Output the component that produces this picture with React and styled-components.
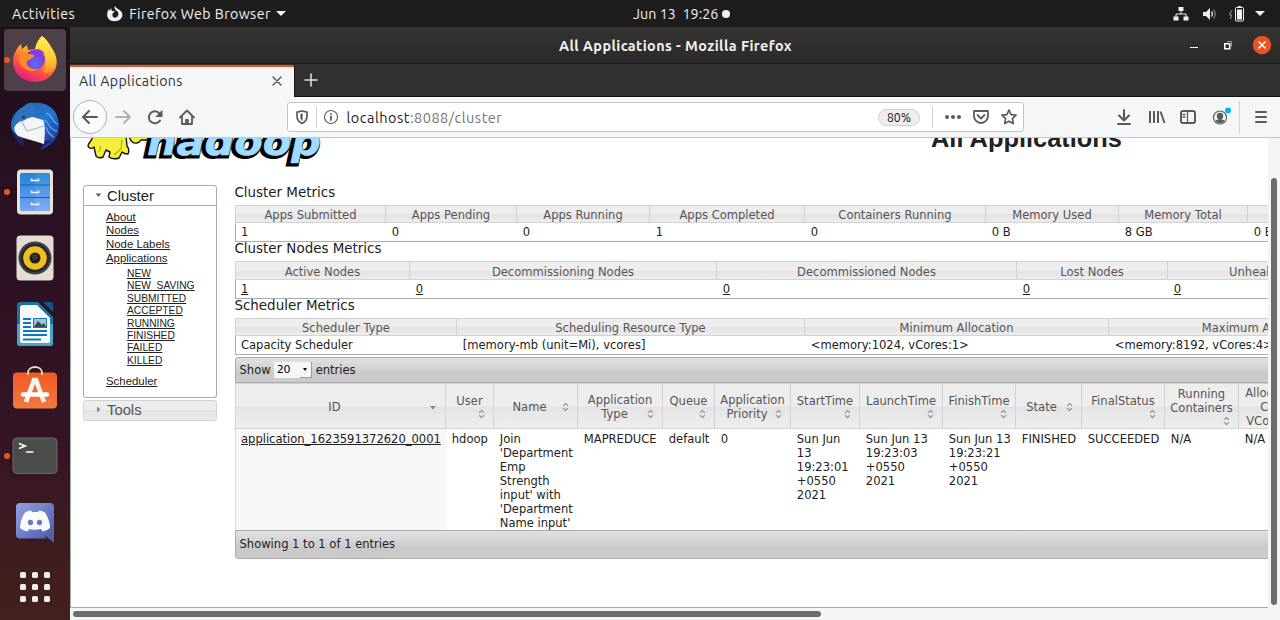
import React from "react";
import styled, { createGlobalStyle, css } from "styled-components";

const Global = createGlobalStyle`
  * { box-sizing: border-box; }
  body { margin: 0; overflow: hidden; background: #fff; }
  svg { display: block; flex: none; }
`;

const ui = css`font-family: Ubuntu, "Noto Sans", "Open Sans", sans-serif;`;
const arial = css`font-family: "Liberation Sans", Arial, sans-serif;`;
const verdana = css`font-family: "DejaVu Sans", Verdana, sans-serif;`;

const Desktop = styled.div`
  width: 1280px; height: 620px; overflow: hidden;
  display: flex; flex-direction: column;
`;
const TopBar = styled.header`
  ${ui} height: 27px; flex: none; background: #1d1d1d; color: #f2f2f2;
  display: grid; grid-template-columns: 621px auto 1fr; align-items: center;
  font-size: 14.2px; line-height: 26px; padding: 0 15px 0 12px;
`;
const TopLeft = styled.div`display: flex; align-items: center;`;
const TopRight = styled.div`display: flex; align-items: center; justify-content: flex-end;`;
const Label = styled.span`
  white-space: pre; letter-spacing: ${(p) => p.$ls || 0}px; margin-left: ${(p) => p.$ml || 0}px;
`;
const Clock = styled.div`display: flex; align-items: center; white-space: pre; gap: 4px; letter-spacing: 0.07px;`;
const ClockDot = styled.i`width: 8px; height: 8px; border-radius: 50%; background: #f2f2f2;`;
const Caret = styled.i`
  border: 5px solid transparent; border-top-color: #f2f2f2; border-bottom: 0;
  margin-left: ${(p) => p.$ml}px;
`;
const SwirlIcon = styled.svg`margin-left: 32px;`;

const Workspace = styled.div`display: flex; flex: 1; min-height: 0;`;
const Dock = styled.nav`
  width: 70px; flex: none; background: linear-gradient(#1f0f1b, #2c1122 40%, #351525 70%, #43211d);
`;
const DockItem = styled.div`
  position: relative; height: 66px; display: flex; align-items: center; justify-content: center;
  ${(p) => p.$running && css`
    &::after { content: ""; position: absolute; left: 4px; top: 30px; width: 6px; height: 6px; border-radius: 50%; background: #e95420; }
  `}
`;
const DockTile = styled.div`
  width: 62px; height: 62px; border-radius: 4px; display: flex; align-items: center; justify-content: center;
  background: ${(p) => (p.$active ? "#4d4048" : "transparent")};
  padding-bottom: ${(p) => (p.$lift > 0 ? p.$lift * 2 : 0)}px;
  padding-top: ${(p) => (p.$lift < 0 ? p.$lift * -2 : 0)}px;
`;

const Window = styled.div`flex: 1; min-width: 0; display: flex; flex-direction: column; background: #f5f6f8;`;
const TitleBar = styled.div`
  ${ui} height: 37px; flex: none; display: grid; grid-template-columns: 1fr auto 1fr; align-items: center;
  background: linear-gradient(#353330, #2b2a2a); border-bottom: 1px solid #1c1c1c; color: #f2f2f2;
  font-weight: 700; font-size: 14.4px;
`;
const TitleText = styled.span`grid-column: 2; letter-spacing: 0.42px; white-space: pre; padding: 2px 0 0 1px;`;
const WindowButtons = styled.div`display: flex; justify-content: flex-end; align-items: center; padding-right: 8px;`;
const TabStrip = styled.div`height: 33px; flex: none; display: flex; background: #323031; border-bottom: 1px solid #111;`;
const Tab = styled.div`
  ${ui} width: 224px; height: 33px; background: #f5f6f8; border-top: 2px solid #e95420; margin-top: 1px;
  display: flex; align-items: center; justify-content: space-between; padding: 0 12px 3px 9px;
  font-size: 14.2px; color: #2e3436;
`;
const NewTab = styled.div`width: 33px; display: flex; align-items: center; justify-content: center; border-left: 1px solid #161616;`;
const Toolbar = styled.div`
  height: 41px; flex: none; background: #f5f6f8; border-bottom: 1px solid #c3c5c8;
  display: flex; align-items: center; padding: 0 13px 0 3px;
`;
const BackButton = styled.div`
  width: 34px; height: 34px; border-radius: 50%; border: 1px solid #b1b1b3; background: #fbfbfc;
  display: flex; align-items: center; justify-content: center;
`;
const NavIcons = styled.div`display: flex; align-items: center; width: 180px; padding-left: 8px; gap: 16px;`;
const UrlBar = styled.div`
  width: 737px; height: 30px; border: 1px solid #c2c4c8; border-radius: 3px; background: #fff;
  display: flex; align-items: center; padding: 0 6px 0 6px;
`;
const Divider = styled.i`width: 1px; height: ${(p) => p.$h || 22}px; background: #cfd1d5; margin: ${(p) => p.$m};`;
const Url = styled.span`
  ${ui} font-size: 14.5px; color: #222; margin-left: 7.5px; flex: 1; white-space: pre; letter-spacing: 0.5px;
  span { color: #737578; }
`;
const Zoom = styled.span`
  ${ui} width: 42px; height: 17px; border: 1px solid #d0d0d2; border-radius: 9px; background: #eeeeef;
  font-size: 12.2px; line-height: 15px; text-align: center; color: #111;
`;
const UrlActions = styled.div`display: flex; align-items: center; gap: 12px;`;
const ToolbarRight = styled.div`display: flex; align-items: center; justify-content: flex-end; flex: 1; height: 100%;`;

const Viewport = styled.div`flex: 1; min-height: 0; display: grid; grid-template: 470px 12px / 1198px 12px;`;
const Page = styled.main`
  background: #fff; border-left: 1px solid #a9a9ab; border-bottom: 1px solid #a9a9ab; overflow: hidden; color: #222;
`;
const VTrack = styled.div`background: #f3f4f6; padding: 40px 3px 0; i { display: block; width: 6px; height: 427px; border-radius: 3px; background: #6c6c6c; }`;
const HTrack = styled.div`background: #f4f5f6; padding: 3px 3px 0; grid-column: 1 / 3; i { display: block; width: 748px; height: 6px; border-radius: 3px; background: #6c6c6c; }`;

const Hero = styled.div`height: 47px; overflow: hidden; display: flex; padding-left: 12px;`;
const HeroTitle = styled.h1`
  ${arial} margin: -16px 0 0 603px; font-size: 25.4px; line-height: 32px; font-weight: 700; white-space: nowrap;
`;
const Columns = styled.div`display: flex; align-items: flex-start; padding-left: 12px;`;
const Side = styled.aside`${arial} width: 134px; flex: none; margin-right: 18px;`;
const SideHead = styled.div`
  height: 21px; border: 1px solid ${(p) => (p.$open ? "#aaa" : "#d3d3d3")};
  border-radius: ${(p) => (p.$open ? "3px 3px 0 0" : "3px")};
  background: ${(p) => (p.$open ? "#fff" : "linear-gradient(#ededed 50%, #e3e3e3 50%, #ececec)")};
  color: ${(p) => (p.$open ? "#212121" : "#555")};
  font-size: 14.8px; line-height: 20px; display: flex; align-items: center; padding: 0 0 ${(p) => (p.$open ? 0 : 2)}px 11px; gap: 5px;
`;
const SideBody = styled.div`
  height: 192px; border: 1px solid #aaa; border-top: 0; border-radius: 0 0 3px 3px; margin-bottom: 2px; padding: 4.6px 0 0 22px;
`;
const SideLink = styled.a`
  display: block; width: max-content; text-decoration: underline; color: #222; white-space: pre;
  font-size: ${(p) => (p.$sub ? 10.25 : 11.4)}px; line-height: ${(p) => (p.$sub ? 12.4 : 13.7)}px;
  margin-left: ${(p) => (p.$sub ? 21 : 0)}px; margin-top: ${(p) => p.$mt || 0}px;
`;
const Main = styled.section`${verdana} width: 1380px; flex: none; font-size: 11.54px;`;
const MetricTitle = styled.h2`
  margin: 0 0 0 -0.6px; font-weight: 400; font-size: 13.45px; height: ${(p) => p.$h}px; line-height: ${(p) => p.$lh}px; white-space: pre;
`;
const Row = styled.div`
  display: grid; grid-template-columns: ${(p) => p.$cols}; height: ${(p) => p.$h}px;
`;
const Head = styled.div`
  border: 1px solid #d3d3d3; border-left-width: ${(p) => (p.$first ? 1 : 0)}px;
  background: linear-gradient(#ededed 50%, #e4e4e4 52%, #ececec); color: #555;
  display: flex; align-items: center; justify-content: center; padding-top: 2px; white-space: pre; overflow: hidden;
`;
const Value = styled.div`
  padding: 0 0 0 ${(p) => (p.$first ? 5 : 5.8)}px; line-height: 18px; white-space: pre;
  border-bottom: 1px solid #aaa; border-left: ${(p) => (p.$first ? "1px solid #aaa" : 0)};
`;
const GridBar = styled.div`
  height: ${(p) => (p.$foot ? 29 : 26)}px; border: 1px solid #aaa; background: linear-gradient(#e2e2e2, #c9c9c9 65%, #cccccc);
  border-radius: ${(p) => (p.$foot ? "0 0 3px 3px" : "3px 3px 0 0")}; margin-top: ${(p) => (p.$foot ? 0 : 4)}px;
  display: flex; align-items: center; padding: 0 0 1px 3.5px; white-space: pre;
`;
const Select = styled.span`
  display: flex; align-items: center; justify-content: space-between; width: 38px; height: 16px; margin: 0 4px 0 3px;
  background: #f5f6f8; padding-left: 3px; color: #000; font-size: 11px;
  i { width: 12px; height: 16px; border: solid #999; border-width: 0 1px 1px 0; display: flex; align-items: center; justify-content: center; }
  i::after { content: ""; border: 2.5px solid transparent; border-top: 3px solid #000; border-bottom: 0; }
`;
const SortHead = styled.div`
  position: relative; border: 1px solid #d3d3d3; border-left-width: ${(p) => (p.$first ? 1 : 0)}px;
  background: linear-gradient(#ededed 50%, #e3e3e3 52%, #efefef); color: #555; text-align: center;
  display: flex; align-items: center; justify-content: center; line-height: 14px; white-space: pre;
  padding: ${(p) => p.$pad || "0"};
`;
const SortMark = styled.span`position: absolute; right: 8px; top: ${(p) => p.$top}px;`;
const Cell = styled.div`
  padding: 3px 0 0 ${(p) => (p.$first ? 5 : 5.8)}px; line-height: 14px; white-space: pre;
  border-left: ${(p) => (p.$first ? "1px solid #ddd" : 0)}; background: ${(p) => (p.$first ? "#f7f7f7" : "transparent")};
  a { text-decoration: underline; }
`;

const dark = "#5a5b5d";

const FirefoxIcon = () => (
  <svg width="46" height="48" viewBox="0 0 46 48">
    <defs>
      <linearGradient id="fx" x1="0.75" y1="0.05" x2="0.3" y2="1"><stop offset="0" stopColor="#fff44f" /><stop offset=".35" stopColor="#ffb22e" /><stop offset=".65" stopColor="#ff5a36" /><stop offset="1" stopColor="#e31587" /></linearGradient>
      <radialGradient id="fp" cx=".5" cy=".7" r=".7"><stop offset="0" stopColor="#5d6cf0" /><stop offset="1" stopColor="#8b30d0" /></radialGradient>
      <linearGradient id="fy" x1="0.6" y1="0" x2="0.6" y2="1"><stop offset="0" stopColor="#fff050" /><stop offset=".6" stopColor="#ffcb35" /><stop offset="1" stopColor="#ff8f2c" /></linearGradient>
    </defs>
    <path d="M30 0 C36 5 38 9 39 11 L41 14 C46 22 46 31 41 37 C36 44 29 46 23 46 C9 46 1 36 1 25 C1 18 5 12 9 8 L10 13 L15 9 L16 14 C18 14 21 13 24 13 L24 10 C25 6 27 3 30 0 Z" fill="url(#fx)" />
    <path d="M30 0 C36 5 38 9 39 11 C46 20 45 30 39 36 C35 38 33 37 31 35 C34 32 36 24 32 17 C29 14 26 14 23 13 C24 7 27 3 30 0 Z" fill="url(#fy)" />
    <circle cx="23" cy="23.500" r="10" fill="url(#fp)" />
    <path d="M24 13 Q30 13 33 18 Q29 16 26 17Z" fill="#9a36d8" />
    <path d="M7 19 C11 16 17 18 22 19 C22 22 18 23 15 25 C13 29 18 34 26 33 C20 38 8 33 7 24 Z" fill="#ff8a26" />
  </svg>
);
const ThunderbirdIcon = () => (
  <svg width="50" height="50" viewBox="0 0 50 50">
    <defs><linearGradient id="tb" x1="0" y1="0" x2=".8" y2="1"><stop offset="0" stopColor="#1b5fb4" /><stop offset=".55" stopColor="#2577cf" /><stop offset="1" stopColor="#26308f" /></linearGradient></defs>
    <path d="M13 6 C17 2 20 1 23 2 C38 0 49 10 49 25 C49 38 40 46 30 49 C33 45 33 44 32 42 L16 38 C7 36 1 32 1 24 C1 16 6 9 13 6 Z" fill="url(#tb)" />
    <path d="M2 30 C5 38 9 43 14 46 L13 38 Z M34 40 L42 39 L30 49 Z" fill="#252463" />
    <path d="M4 25 L14 17 L23 16 L33 19 Q36 24 34 43 L8 35 Q4 31 4 25Z" fill="#f4f4f7" />
    <path d="M10 18 L17 30 L34 25" fill="none" stroke="#b4b8c0" strokeWidth="1.200" />
    <path d="M13 6 C17 2 22 1 22 3 C27 6 27 12 24 14 C21 17 17 17 15 19 L12 20 C7 20 6 24 4 27 C2 17 7 9 13 6 Z" fill="#2b74bd" />
    <circle cx="13.500" cy="16" r="1.600" fill="#0e3764" />
    <path d="M34 19 C40 21 38 29 47 30 M36 12 C43 14 42 22 48 23 M36 26 Q38 33 44 36" fill="none" stroke="#4ba3ec" strokeWidth="1.500" />
  </svg>
);
const FilesIcon = () => (
  <svg width="38" height="46" viewBox="0 0 38 46">
    <defs><linearGradient id="fl" x1="0" y1="0" x2="0" y2="1"><stop offset="0" stopColor="#1f83db" /><stop offset="1" stopColor="#78a4f4" /></linearGradient></defs>
    <rect x="1" y="0.500" width="36" height="45" rx="4" fill="#e8e3da" />
    <rect x="4" y="4" width="30" height="38" rx="1.500" fill="url(#fl)" />
    <path d="M19 4 H34 V42 H19Z" fill="#fff" opacity=".08" />
    <path d="M4 16 H34 M4 28.500 H34" stroke="#17639e" strokeWidth="1.200" />
    <path d="M15.500 9.500 V11.500 H22.500 V9.500 M15.500 21.500 V23.500 H22.500 V21.500 M15.500 33.500 V35.500 H22.500 V33.500" fill="none" stroke="#f1f3f6" strokeWidth="1.600" />
  </svg>
);
const RhythmboxIcon = () => (
  <svg width="38" height="46" viewBox="0 0 38 46">
    <rect x="0.500" y="0.500" width="37" height="45" rx="4" fill="#e3ddd2" />
    <circle cx="19" cy="23" r="16.500" fill="#3d4147" /><circle cx="19" cy="23" r="14.300" fill="#25272c" />
    <circle cx="19" cy="23" r="11.800" fill="#f1bf1d" /><circle cx="19" cy="23" r="5.500" fill="#202125" /><circle cx="19" cy="22" r="3" fill="#37373b" />
  </svg>
);
const WriterIcon = () => (
  <svg width="38" height="46" viewBox="0 0 38 46">
    <path d="M4 1 H22 L37 16 V42 Q37 45 34 45 H4 Q1 45 1 42 V4 Q1 1 4 1Z" fill="#1873a8" />
    <path d="M1 23 H37 V42 Q37 45 34 45 H4 Q1 45 1 42Z" fill="#4aa3cf" />
    <path d="M27 1 H35 Q37 1 37 3 V11 Z" fill="#0d5a87" />
    <path d="M7 4 H21 L34 17 V40 Q34 42 32 42 H7 Q4 42 4 40 V7 Q4 4 7 4Z" fill="#f8f8f8" />
    <path d="M7 18 H15 M7 22 H15 M7 26 H15 M7 30 H31 M7 34 H31 M7 38.500 H25" stroke="#1178b8" strokeWidth="2" />
    <rect x="17.500" y="17.500" width="13" height="9" fill="#8ec9ef" stroke="#1178b8" /><path d="M18 26 L22 20 L26 24 L28 22 L30 26Z" fill="#444" /><circle cx="28.500" cy="19.500" r="1.500" fill="#f5c211" />
  </svg>
);
const SoftwareIcon = () => (
  <svg width="46" height="46" viewBox="0 0 46 46">
    <defs><linearGradient id="sw" x1="0" y1="0" x2="0" y2="1"><stop offset="0" stopColor="#f15a24" /><stop offset="1" stopColor="#f3793f" /></linearGradient></defs>
    <rect x="1" y="8.500" width="44" height="36" rx="4" fill="url(#sw)" />
    <path d="M16 11 V9 C16 1 30 1 30 9 V11" fill="none" stroke="#e9dcae" strokeWidth="1.800" />
    <path d="M14 38 L22 16 H24 L32 38" fill="none" stroke="#f8f3ee" strokeWidth="4.600" /><path d="M11 30.500 H35" stroke="#fff" strokeWidth="4.500" strokeLinecap="round" />
  </svg>
);
const TerminalIcon = () => (
  <svg width="46" height="38" viewBox="0 0 46 38">
    <rect x="1" y="1" width="44" height="35.500" rx="4" fill="#4c4c4c" stroke="#6a6a6a" />
    <path d="M7 6.500 L13 9 L7 11.500" fill="none" stroke="#fff" strokeWidth="1.800" /><path d="M14 15 H21.500" stroke="#fff" strokeWidth="1.500" />
  </svg>
);
const DiscordIcon = () => (
  <svg width="38" height="42" viewBox="0 0 38 42">
    <defs><linearGradient id="dc" x1="0" y1="0" x2="1" y2="1"><stop offset="0" stopColor="#93a3dc" /><stop offset=".6" stopColor="#6276c4" /><stop offset="1" stopColor="#4b5695" /></linearGradient></defs>
    <path d="M4 1 H34 Q38 1 38 5 V41 L29 33.500 L30 36.500 H4 Q0 36.500 0 32.500 V5 Q0 1 4 1Z" fill="url(#dc)" />
    <path d="M9 10.500 Q12 8.500 15 8.500 L16 10 H22 L23 8.500 Q26 8.500 29 10.500 Q34 18 34 26 Q31 29 26.500 29.500 L25 27 Q19 28.500 13 27 L11.500 29.500 Q7 29 4 26 Q4 18 9 10.500Z" fill="#fbfbfd" />
    <ellipse cx="14.500" cy="20.500" rx="2.600" ry="2.800" fill="#6779c4" /><ellipse cx="23.500" cy="20.500" rx="2.600" ry="2.800" fill="#6779c4" />
  </svg>
);
const AppsIcon = () => (
  <svg width="30" height="30" viewBox="0 0 30 30">
    {[0, 12, 24].map((y) => [0, 12, 24].map((x) => <rect key={`${x}-${y}`} x={x} y={y} width="6" height="6" rx="1.500" fill="#f0efed" />))}
  </svg>
);

const dockItems = [
  { Icon: FirefoxIcon, active: true, running: true }, { Icon: ThunderbirdIcon }, { Icon: FilesIcon, running: true },
  { Icon: RhythmboxIcon }, { Icon: WriterIcon }, { Icon: SoftwareIcon, lift: 3 }, { Icon: TerminalIcon, running: true },
  { Icon: DiscordIcon, lift: -1 }, { Icon: AppsIcon, lift: 1 },
];

const Ico = ({ children, w = 16, h = 16, c = dark, sw = 2, ...rest }) => (
  <svg width={w} height={h} viewBox={`0 0 ${w} ${h}`} fill="none" stroke={c} strokeWidth={sw} strokeLinecap="round" strokeLinejoin="round" {...rest}>{children}</svg>
);

const SortIcon = ({ desc }) => (
  <svg width={desc ? 8 : 7} height="10" viewBox="0 0 8 10">
    {desc ? <path d="M1 3 H7 L4 6.500Z" fill="#888" />
      : <path d="M1.200 3.700 L4 1 L6.800 3.700 M1.200 6.300 L4 9 L6.800 6.300" fill="none" stroke="#999" strokeWidth="1.500" />}
  </svg>
);

const HadoopLogo = () => (
  <svg width="245" height="30" viewBox="83 138 245 30">
    <g fill="#f4f03a" stroke="#111" strokeWidth="1.400" strokeLinejoin="round">
      <path d="M93 136 C92 141 88 143 88 146 C89 149 92 149 94 147 L96 156 Q99 159 103 157 L106 150 L110 152 L109 157 Q113 160 119 158 L122 152 Q124 154 128 154 Q130 150 127 146 L126 136Z" />
      <path d="M129 136 Q131 144 137 143 Q140 142 141 140 L147 140 L149 136Z" />
    </g>
    <path d="M99 152 Q101 149 100 146 M114 155 L121 149 L122 140" fill="none" stroke="#b2ac12" strokeWidth="1.200" />
    <g transform="translate(144 155)" fontFamily='"DejaVu Sans", sans-serif' fontWeight="700" fontStyle="italic" fontSize="38">
      <text x="1" y="0.500" textLength="174" lengthAdjust="spacingAndGlyphs" stroke="#000" strokeWidth="5" fill="#000" strokeLinejoin="miter">hadoop</text>
      <text x="3" y="-0.500" textLength="174" lengthAdjust="spacingAndGlyphs" stroke="#9fdcff" strokeWidth="0.600" fill="#9fdcff">hadoop</text>
    </g>
  </svg>
);

const MetricTable = ({ widths, heads, values, link, headH = 18, valueH = 17 }) => {
  const cols = widths.map((w) => `${w}px`).join(" ");
  return (
    <>
      <Row $cols={cols} $h={headH}>{heads.map((h, i) => <Head key={h} $first={i === 0}>{h}</Head>)}</Row>
      <Row $cols={cols} $h={valueH}>{values.map((v, i) => <Value key={i} $first={i === 0}>{link ? <u>{v}</u> : v}</Value>)}</Row>
    </>
  );
};

const appColumns = [
  { w: 211, head: "ID", top: 19, desc: true, pad: "2px 12px 0 0", body: <a>application_1623591372620_0001</a> },
  { w: 48, head: "User", top: 25, pad: "0 0 11px", body: "hdoop" },
  { w: 84, head: "Name", top: 18, pad: "2px 12px 0 0", body: "Join\n'Department\nEmp\nStrength\ninput' with\n'Department\nName input'" },
  { w: 85, head: "Application\nType   ", top: 25, pad: "1px 0 0", body: "MAPREDUCE" },
  { w: 52, head: "Queue", top: 25, pad: "0 0 11px", body: "default" },
  { w: 76, head: "Application\nPriority   ", top: 25, pad: "1px 0 0", body: "0" },
  { w: 69, head: "StartTime", top: 25, pad: "0 0 11px", body: "Sun Jun\n13\n19:23:01\n+0550\n2021" },
  { w: 83, head: "LaunchTime", top: 25, pad: "0 0 11px", body: "Sun Jun 13\n19:23:03\n+0550\n2021" },
  { w: 73, head: "FinishTime", top: 25, pad: "0 0 11px", body: "Sun Jun 13\n19:23:21\n+0550\n2021" },
  { w: 66, head: "State", top: 18, pad: "2px 14px 0 0", body: "FINISHED" },
  { w: 83, head: "FinalStatus", top: 25, pad: "0 0 11px", body: "SUCCEEDED" },
  { w: 74, head: "Running\nContainers", top: 32, pad: "0 0 11px", body: "N/A" },
  { w: 67, head: "Allocated\nCPU\nVCores   ", top: 33, pad: "2px 0 0", body: "N/A" },
];
const appCols = appColumns.map((c) => `${c.w}px`).join(" ");

const states = ["NEW", "NEW_SAVING", "SUBMITTED", "ACCEPTED", "RUNNING", "FINISHED", "FAILED", "KILLED"];

export default function App() {
  return (
    <Desktop>
      <Global />
      <TopBar>
        <TopLeft>
          <Label $ls={0.5}>Activities</Label>
          <SwirlIcon width="16" height="16" viewBox="0 0 16 16">
            <path d="M8 0 C9 2 10 2 11 3 C15 5 16 8 15 11 C13 16 4 17 1 12 C-0.500 9 0 6 2 3 L3 5 L4 2 L5 5 L8 5 L6 7 C4 10 7 13 10 11 C12 9 12 7 10 5 C8 4 7 2 8 0Z" fill="#f2f2f2" />
          </SwirlIcon>
          <Label $ml={6} $ls={0.43}>Firefox Web Browser</Label>
          <Caret $ml={5} />
        </TopLeft>
        <Clock>{"Jun 13  19:26"}<ClockDot /></Clock>
        <TopRight>
          <svg width="16" height="14" viewBox="0 0 16 14" fill="#f2f2f2"><path d="M5.500 0h5v4h-5zM0.500 9.500h5v4h-5zM10.500 9.500h5v4h-5z" /><path d="M8 4V7M3 10V7H13V10" fill="none" stroke="#f2f2f2" /></svg>
          <svg width="44" height="16" viewBox="0 0 44 16"><path d="M14 6h3l4-4v12l-4-4h-3z" fill="#f2f2f2" /><path d="M22.500 5.500q2 2.500 0 5" fill="none" stroke="#ddd" strokeWidth="1.300" /><path d="M24.500 3.500q3.500 4.500 0 9" fill="none" stroke="#777" strokeWidth="1.300" /><path d="M43 4l-2.500 5h2l-1 4" fill="none" stroke="#999" /></svg>
          <svg width="12" height="16" viewBox="0 0 12 16"><rect x="2.500" y="1.500" width="8" height="13.500" rx="1" fill="none" stroke="#f2f2f2" /><path d="M5 0h3v1.500H5zM4 3.500h5v10H4z" fill="#f2f2f2" /></svg>
          <Caret $ml={10} />
        </TopRight>
      </TopBar>
      <Workspace>
        <Dock>
          {dockItems.map(({ Icon, active, running, lift = 0 }, i) => (
            <DockItem key={i} $running={running}><DockTile $active={active} $lift={lift}><Icon /></DockTile></DockItem>
          ))}
        </Dock>
        <Window>
          <TitleBar>
            <TitleText>All Applications - Mozilla Firefox</TitleText>
            <WindowButtons>
              <svg width="82" height="19" viewBox="0 0 82 19"><path d="M0 11.500h8" stroke="#fff" /><rect x="34.750" y="7.750" width="5" height="5" fill="none" stroke="#fff" strokeWidth="1.500" /><path d="M37 5.500h4.500v5" fill="none" stroke="#999" /><circle cx="72" cy="9" r="9.200" fill="#e95420" /><path d="M68.500 5.500l7 7m0-7l-7 7" stroke="#fff" strokeWidth="1.500" /></svg>
            </WindowButtons>
          </TitleBar>
          <TabStrip>
            <Tab><Label $ls={0.34}>All Applications</Label><Ico w={10} h={10} sw={1.5}><path d="M1 1l8 8M9 1l-8 8" /></Ico></Tab>
            <NewTab><Ico w={14} h={14} sw={1.6} c="#ddd"><path d="M7 1v12M1 7h12" /></Ico></NewTab>
          </TabStrip>
          <Toolbar>
            <BackButton><Ico><path d="M1 8h14M7 2L1 8l6 6" /></Ico></BackButton>
            <NavIcons>
              <Ico c="#b0b1b3"><path d="M1 8h14M9 2l6 6-6 6" /></Ico>
              <Ico><path d="M13 11.500A6 6 0 1 1 12.500 4.500" /><path d="M15 2v5.500H9.500z" fill={dark} strokeWidth="1" /></Ico>
              <Ico sw={1.8}><path d="M1 8.500L8 1.500l7 7M3 8v7h10V8M7 15v-4h2v4" /></Ico>
            </NavIcons>
            <UrlBar>
              <Ico w={16} h={16} sw={1.7}><path d="M8 2L3 3.200V7c0 4 2 6 5 7.500 3-1.500 5-3.500 5-7.500V3.200z" /><path d="M8 5v6M7 5.500v4" strokeWidth="1.300" /></Ico>
              <Divider $m="0 6px 0 6px" />
              <Ico w={16} h={16} sw={1.1}><circle cx="8" cy="8" r="6.500" /><path d="M8 7.500v3.500M8 5v0" strokeWidth="1.800" /></Ico>
              <Url>localhost<span>:8088/cluster</span></Url>
              <Zoom>80%</Zoom>
              <Divider $m="0 12px 0 12px" />
              <UrlActions>
                <svg width="16" height="4" viewBox="0 0 16 4" fill={dark}><circle cx="2" cy="2" r="2" /><circle cx="8" cy="2" r="2" /><circle cx="14" cy="2" r="2" /></svg>
                <Ico sw={1.8}><path d="M1 2h14v5a7 7 0 0 1-14 0z" /><path d="M4.500 6L8 9.500 11.500 6" /></Ico>
                <Ico sw={1.7}><path d="M8 1l2.100 4.600 4.900.6-3.600 3.400.9 5L8 12.200l-4.300 2.400.9-5L1 6.200l4.900-.6z" /></Ico>
              </UrlActions>
            </UrlBar>
            <ToolbarRight>
              <Ico w={14} h={16}><path d="M7 1v10M2 6.500l5 5 5-5M1 15h12" /></Ico>
              <Ico w={49} h={16} strokeLinecap="butt"><path d="M19 2v12M23 2v12M27 2v12M29.500 2.500l4 11.500" /></Ico>
              <Ico w={16} h={16}><rect x="1" y="2" width="14" height="12" rx="2" /><path d="M7.500 2v12M3 5.500h2M3 8h2" strokeWidth="1.300" /></Ico>
              <Ico w={36} h={20} sw={1.2}><circle cx="24" cy="10.500" r="6.500" /><circle cx="24" cy="9" r="2.600" fill={dark} /><path d="M20 14q4-3 8 0q-4 3-8 0z" fill={dark} /><circle cx="32" cy="3.500" r="3" fill="#00b3f4" stroke="none" /></Ico>
              <Divider $h={33} $m="0 15px 0 7px" />
              <Ico w={12} h={12}><path d="M1 1h10M1 6h10M1 11h10" /></Ico>
            </ToolbarRight>
          </Toolbar>
          <Viewport>
            <Page>
              <Hero><HadoopLogo /><HeroTitle>All Applications</HeroTitle></Hero>
              <Columns>
                <Side>
                  <SideHead $open><svg width="7" height="5" viewBox="0 0 7 5"><path d="M0.500 0.500h6L3.500 4z" fill="#666" /></svg><span>Cluster</span></SideHead>
                  <SideBody>
                    {["About", "Nodes", "Node Labels", "Applications"].map((t) => <SideLink key={t}>{t}</SideLink>)}
                    {states.map((t, i) => <SideLink key={t} $sub $mt={i === 0 ? 2.5 : 0}>{t}</SideLink>)}
                    <SideLink $mt={8}>Scheduler</SideLink>
                  </SideBody>
                  <SideHead><svg width="7" height="7" viewBox="0 0 7 7"><path d="M2 0.500v6L5.500 3.500z" fill="#888" /></svg><span>Tools</span></SideHead>
                </Side>
                <Main>
                  <MetricTitle $h={20} $lh={16}>Cluster Metrics</MetricTitle>
                  <MetricTable widths={[151, 131, 133, 155, 181, 133, 129, 152]}
                    heads={["Apps Submitted", "Apps Pending", "Apps Running", "Apps Completed", "Containers Running", "Memory Used", "Memory Total", "Memory Reserved"]}
                    values={["1", "0", "0", "1", "0", "0 B", "8 GB", "0 B"]} />
                  <MetricTitle $h={21} $lh={18}>Cluster Nodes Metrics</MetricTitle>
                  <MetricTable link headH={19} widths={[175, 307, 300, 151, 222]}
                    heads={["Active Nodes", "Decommissioning Nodes", "Decommissioned Nodes", "Lost Nodes", "Unhealthy Nodes"]}
                    values={["1", "0", "0", "0", "0"]} />
                  <MetricTitle $h={21} $lh={18}>Scheduler Metrics</MetricTitle>
                  <MetricTable widths={[222, 348, 304, 304]}
                    heads={["Scheduler Type", "Scheduling Resource Type", "Minimum Allocation", "Maximum Allocation"]}
                    values={["Capacity Scheduler", "[memory-mb (unit=Mi), vcores]", "<memory:1024, vCores:1>", "<memory:8192, vCores:4>"]} />
                  <GridBar>Show<Select>20<i /></Select>entries</GridBar>
                  <Row $cols={appCols} $h={46}>
                    {appColumns.map((c, i) => (
                      <SortHead key={i} $first={i === 0} $pad={c.pad}>{c.head}<SortMark $top={c.top}><SortIcon desc={c.desc} /></SortMark></SortHead>
                    ))}
                  </Row>
                  <Row $cols={appCols} $h={101}>{appColumns.map((c, i) => <Cell key={i} $first={i === 0}>{c.body}</Cell>)}</Row>
                  <GridBar $foot>Showing 1 to 1 of 1 entries</GridBar>
                </Main>
              </Columns>
            </Page>
            <VTrack><i /></VTrack>
            <HTrack><i /></HTrack>
          </Viewport>
        </Window>
      </Workspace>
    </Desktop>
  );
}
